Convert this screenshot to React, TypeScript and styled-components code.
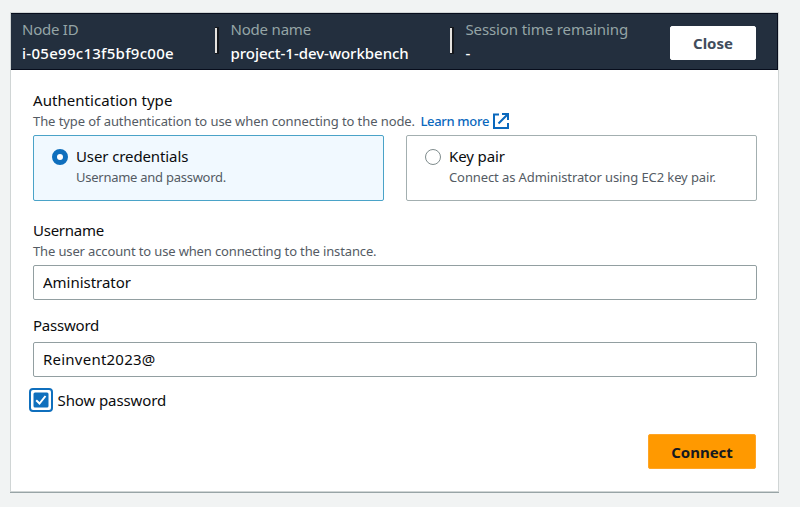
import React, { useState } from "react";
import styled, { createGlobalStyle } from "styled-components";

const GlobalStyle = createGlobalStyle`
  * { box-sizing: border-box; }
  html, body { margin: 0; height: 100%; overflow: hidden; }
  body { background: #f1f3f3; font-family: "Noto Sans", "Open Sans", sans-serif; color: #0b0c0e; }
`;

const Page = styled.main`
  height: 507px;
  padding: 13px 22px 15px 11px;
`;

const Card = styled.section`
  height: 478px;
  background: #fff;
  box-shadow: 0 0 0 1px #d0d5d5, 0 1px 0 1px #98a4a6;
`;

const Header = styled.header`
  display: flex;
  align-items: center;
  height: 57px;
  padding: 0 21px 0 11px;
  background: #232f3e;
  border: solid #070d1c;
  border-width: 1px 1px 1px 0;
`;

const Info = styled.div<{ $width: number }>`
  width: ${(p) => p.$width}px;
  flex: none;
  padding-bottom: 2px;
  line-height: 24px;
  white-space: nowrap;
`;

const Divider = styled.span`
  flex: none;
  width: 2px;
  height: 25px;
  margin: 0 13.5px 2px 0;
  background: #e4e2df;
  box-shadow: 1px 0 0 1px #14171c;
`;

const Text = styled.span<{ $size?: number; $weight?: number; $color?: string; $track?: number }>`
  display: block;
  white-space: nowrap;
  font-size: ${(p) => p.$size ?? 15}px;
  font-weight: ${(p) => p.$weight ?? 400};
  color: ${(p) => p.$color ?? "#0b0c0e"};
  letter-spacing: ${(p) => p.$track ?? 0}px;
`;

const Button = styled.button<{ $primary?: boolean }>`
  flex: none;
  display: flex;
  align-items: center;
  justify-content: center;
  width: ${(p) => (p.$primary ? 108 : 86)}px;
  height: ${(p) => (p.$primary ? 35 : 34)}px;
  margin-left: auto;
  margin-top: ${(p) => (p.$primary ? 0 : 2)}px;
  padding: 0;
  border: 1px solid ${(p) => (p.$primary ? "#ffa526" : "#fff")};
  border-radius: 2px;
  background: ${(p) => (p.$primary ? "#ff9900" : "#fff")};
  font-family: inherit;
`;

const Body = styled.div`
  padding: 18px 22px 0;
`;

const Label = styled.div`
  height: 24px;
  line-height: 24px;
`;

const Hint = styled.div`
  display: flex;
  align-items: center;
  height: 18px;
  line-height: 18px;
  margin-bottom: 5px;
`;

const LearnMore = styled.a`
  display: flex;
  align-items: center;
  gap: 4px;
  margin-left: 5.5px;
`;

const Tiles = styled.div`
  display: grid;
  grid-template-columns: 351px 351px;
  gap: 22px;
  height: 66px;
  margin-bottom: 17px;
`;

const Tile = styled.div<{ $selected: boolean }>`
  display: flex;
  gap: 8.5px;
  padding: 8px 0 0 17.5px;
  border: 1px solid ${(p) => (p.$selected ? "#4aa3c8" : "#a3afb0")};
  border-radius: 2px;
  background: ${(p) => (p.$selected ? "#f1f9ff" : "#fff")};
  cursor: pointer;
`;

const Radio = styled.span<{ $selected: boolean }>`
  flex: none;
  width: 16px;
  height: 16px;
  margin-top: 4.5px;
  border-radius: 50%;
  background: #fff;
  border: ${(p) => (p.$selected ? "5px solid #0f6fbd" : "1px solid #7f8c8d")};
`;

const TileText = styled.div`
  line-height: 24px;
  & > span + span { line-height: 18px; }
`;

const Input = styled.input<{ $track: number }>`
  display: block;
  width: 724px;
  height: 35px;
  padding: 0 9px 1px;
  border: 1px solid #929fa1;
  border-radius: 2px;
  outline: none;
  background: #fff;
  color: #0b0c0e;
  font: 15px "Noto Sans", sans-serif;
  letter-spacing: ${(p) => p.$track}px;
`;

const Field = styled.div<{ $gap: number }>`
  margin-bottom: ${(p) => p.$gap}px;
  & > ${Label} + ${Input} { margin-top: 5px; }
`;

const CheckRow = styled.div`
  display: flex;
  align-items: center;
  gap: 4.5px;
  height: 24px;
  margin-left: -4px;
`;

const CheckFrame = styled.span`
  display: flex;
  align-items: center;
  justify-content: center;
  width: 24px;
  height: 24px;
  border: 2px solid #0f6fbd;
  border-radius: 4px;
`;

const Actions = styled.div`
  display: flex;
  margin-top: 22px;
`;

function ExternalIcon() {
  return (
    <svg width="16" height="16" viewBox="0 0 16 16" fill="none" stroke="#0a68bd" strokeWidth="2">
      <path d="M6 1.5H1v13.5h14V10" />
      <path d="M9 1h6v6M15 1L5.5 10.5" />
    </svg>
  );
}

function CheckIcon() {
  return (
    <svg width="16" height="16" viewBox="0 0 16 16">
      <rect x="0.5" y="0.5" width="15" height="15" rx="1.5" fill="#0f6fbd" />
      <path d="M3.2 8.3l3.3 3.2 6-7.5" fill="none" stroke="#fff" strokeWidth="2" />
    </svg>
  );
}

const muted = "#95a5a6";
const secondary = "#545b64";

const tiles = [
  { id: "user", title: "User credentials", text: "Username and password.", titleTrack: -0.11, textTrack: -0.26 },
  { id: "key", title: "Key pair", text: "Connect as Administrator using EC2 key pair.", titleTrack: -0.1, textTrack: -0.1 },
];

export default function App() {
  const [auth, setAuth] = useState("user");
  return (
    <>
      <GlobalStyle />
      <Page>
        <Card>
          <Header>
            <Info $width={193}>
              <Text $color={muted} $track={-0.25}>Node ID</Text>
              <Text $color="#fff" $weight={500} $track={0.28}>i-05e99c13f5bf9c00e</Text>
            </Info>
            <Divider />
            <Info $width={219.5}>
              <Text $color={muted} $track={-0.2}>Node name</Text>
              <Text $color="#fff" $weight={500} $track={-0.03}>project-1-dev-workbench</Text>
            </Info>
            <Divider />
            <Info $width={170}>
              <Text $color={muted} $track={-0.12}>Session time remaining</Text>
              <Text $color="#fff" $weight={500}>-</Text>
            </Info>
            <Button>
              <Text $color="#414d5c" $weight={700}>Close</Text>
            </Button>
          </Header>
          <Body>
            <Label><Text $track={0.05}>Authentication type</Text></Label>
            <Hint>
              <Text $size={13} $color={secondary} $track={-0.085}>The type of authentication to use when connecting to the node.</Text>
              <LearnMore>
                <Text $size={13} $weight={500} $color="#0a68bd" $track={-0.33}>Learn more</Text>
                <ExternalIcon />
              </LearnMore>
            </Hint>
            <Tiles>
              {tiles.map((t) => (
                <Tile key={t.id} $selected={auth === t.id} onClick={() => setAuth(t.id)}>
                  <Radio $selected={auth === t.id} />
                  <TileText>
                    <Text $track={t.titleTrack}>{t.title}</Text>
                    <Text $size={13} $color={secondary} $track={t.textTrack}>{t.text}</Text>
                  </TileText>
                </Tile>
              ))}
            </Tiles>
            <Field $gap={13}>
              <Label><Text $track={-0.25}>Username</Text></Label>
              <Hint>
                <Text $size={13} $color={secondary} $track={-0.14}>The user account to use when connecting to the instance.</Text>
              </Hint>
              <Input $track={-0.03} defaultValue="Aministrator" />
            </Field>
            <Field $gap={11}>
              <Label><Text $track={-0.22}>Password</Text></Label>
              <Input $track={0.23} defaultValue="Reinvent2023@" />
            </Field>
            <CheckRow>
              <CheckFrame><CheckIcon /></CheckFrame>
              <Text $track={-0.1}>Show password</Text>
            </CheckRow>
            <Actions>
              <Button $primary><Text $weight={700} $color="#16191f">Connect</Text></Button>
            </Actions>
          </Body>
        </Card>
      </Page>
    </>
  );
}
